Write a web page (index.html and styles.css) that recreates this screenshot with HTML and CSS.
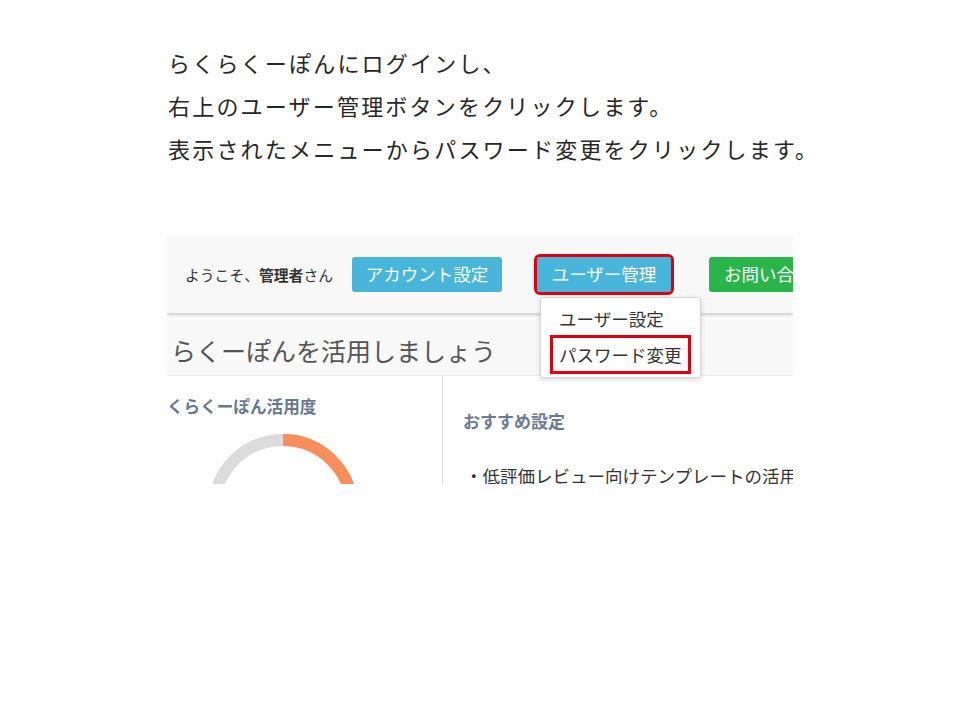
FILE: index.html
```html
<!DOCTYPE html>
<html lang="ja">
<head>
<meta charset="utf-8">
<title>パスワード変更の手順</title>
<link rel="stylesheet" href="styles.css">
</head>
<body>
<div class="intro">
  <p>らくらくーぽんにログインし、</p>
  <p>右上のユーザー管理ボタンをクリックします。</p>
  <p>表示されたメニューからパスワード変更をクリックします。</p>
</div>
<div class="shot">
  <div class="topbar">
    <span class="greet">ようこそ、<b>管理者</b>さん</span>
    <span class="btn btn-info btn-account">アカウント設定</span>
    <span class="btn btn-info btn-user">ユーザー管理</span>
    <span class="btn btn-green">お問い合わせ</span>
  </div>
  <div class="dropdown">
    <div class="dd-item">ユーザー設定</div>
    <div class="dd-item"><span class="mark">パスワード変更</span></div>
  </div>
  <div class="title">らくーぽんを活用しましょう</div>
  <div class="content">
    <div class="col-left">
      <div class="heading">くらくーぽん活用度</div>
      <svg class="donut" width="160" height="160" viewBox="0 0 160 160">
        <circle cx="80" cy="80" r="69" fill="none" stroke="#dcdcdc" stroke-width="12"/>
        <circle cx="80" cy="80" r="69" fill="none" stroke="#f98d5b" stroke-width="12"
          stroke-dasharray="152 500" transform="rotate(-90 80 80)"/>
      </svg>
    </div>
    <div class="col-right">
      <div class="heading heading-r">おすすめ設定</div>
      <div class="bullet">・低評価レビュー向けテンプレートの活用</div>
    </div>
  </div>
</div>
</body>
</html>
```
FILE: styles.css
```css
html, body {
  margin: 0;
  padding: 0;
  background: #ffffff;
  font-family: "Noto Sans CJK JP", "Noto Sans", sans-serif;
}

.intro {
  padding: 41px 0 0 168px;
  color: #262626;
  font-size: 22px;
  line-height: 43px;
  letter-spacing: 2.2px;
}

.intro p {
  margin: 0;
  white-space: nowrap;
}

.shot {
  position: relative;
  margin: 66px 0 0 167px;
  width: 626px;
  height: 248px;
  overflow: hidden;
  background: #ffffff;
}

.topbar {
  position: relative;
  z-index: 1;
  height: 77px;
  background: #f8f8f8;
  display: flex;
  align-items: center;
  padding-left: 18px;
  box-shadow: 0 2px 3px rgba(0, 0, 0, 0.18);
  white-space: nowrap;
}

.greet {
  color: #333333;
  font-size: 14.8px;
  line-height: 20px;
}

.greet b {
  font-weight: 700;
}

.btn {
  flex: none;
  display: inline-flex;
  align-items: center;
  height: 35px;
  border-radius: 3px;
  color: #ffffff;
  font-size: 17.5px;
  line-height: 32px;
  padding: 0 14px 2px;
  box-sizing: border-box;
}

.btn-info {
  background: #47b6da;
}

.btn-account {
  margin-left: 19px;
  width: 150px;
  justify-content: center;
}

.btn-user {
  margin-left: 35px;
  width: 134px;
  justify-content: center;
  outline: 3px solid #e0000f;
}

.btn-green {
  margin-left: 38px;
  background: #2ab54a;
  padding: 0 15px 2px;
}

.dropdown {
  position: absolute;
  z-index: 2;
  left: 373px;
  top: 61px;
  width: 161px;
  height: 81px;
  box-sizing: border-box;
  background: #ffffff;
  border: 1px solid #d6d6d6;
  border-radius: 2px;
  box-shadow: 0 2px 5px rgba(0, 0, 0, 0.15);
  padding-top: 5px;
  color: #333333;
  font-size: 17.5px;
}

.dd-item {
  padding-left: 18px;
  line-height: 32px;
  white-space: nowrap;
}

.mark {
  display: inline-block;
  margin-left: -9px;
  padding: 0 6px;
  line-height: 33px;
  border: 3px solid #e0000f;
}

.title {
  height: 63px;
  box-sizing: border-box;
  padding: 19px 0 0 4px;
  background: #f9f9f9;
  border-bottom: 1px solid #ebebeb;
  color: #555555;
  font-size: 25px;
  line-height: 36px;
  white-space: nowrap;
}

.content {
  display: flex;
  height: 120px;
}

.col-left {
  flex: none;
  width: 275px;
  border-right: 1px solid #dddddd;
  padding-top: 18px;
}

.heading {
  color: #64788f;
  font-size: 16.6px;
  font-weight: 700;
  line-height: 24px;
  white-space: nowrap;
}

.donut {
  display: block;
  margin: 11px 0 0 36px;
}

.col-right {
  flex: 1;
  padding: 33px 0 0 20px;
  white-space: nowrap;
}

.heading-r {
  font-size: 17px;
  color: #6a7c94;
}

.bullet {
  margin-top: 30px;
  margin-left: 2px;
  color: #333333;
  font-size: 17.5px;
  line-height: 26px;
}
```
